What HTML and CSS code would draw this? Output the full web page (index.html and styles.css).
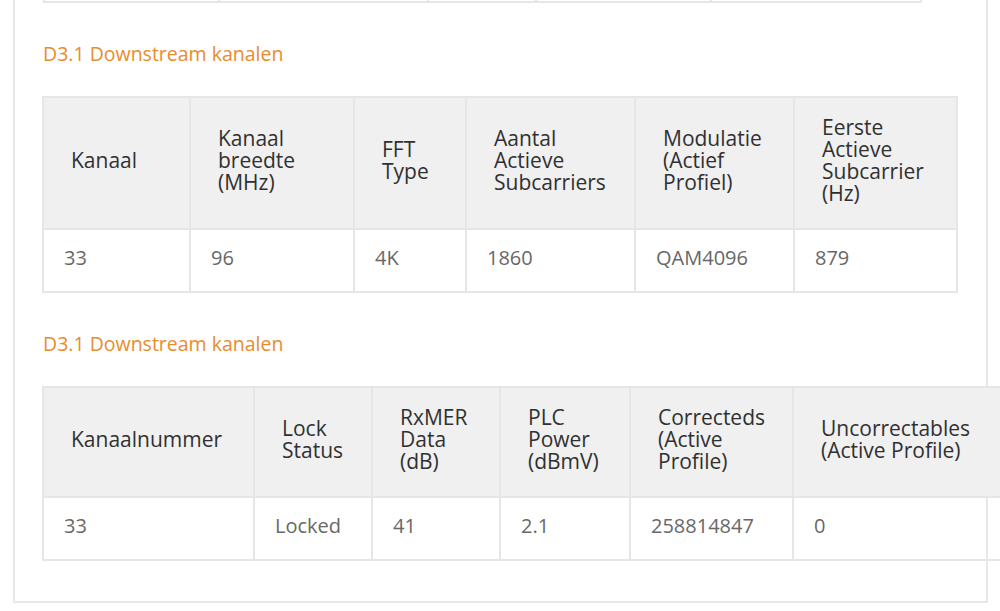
FILE: index.html
```html
<!DOCTYPE html>
<html lang="nl">
<head>
<meta charset="utf-8">
<title>D3.1 Downstream kanalen</title>
<link rel="stylesheet" href="styles.css">
</head>
<body>
<div class="panel">
  <table class="grid prev">
    <colgroup><col class="p1"><col class="p2"><col class="p3"><col class="p4"><col class="p5"></colgroup>
    <tr><td class="stub"></td><td class="stub"></td><td class="stub"></td><td class="stub"></td><td class="stub"></td></tr>
  </table>

  <section class="block">
    <h3 class="title">D3.1 Downstream kanalen</h3>
    <table class="grid t1">
      <colgroup><col class="a1"><col class="a2"><col class="a3"><col class="a4"><col class="a5"><col class="a6"></colgroup>
      <thead>
        <tr>
          <th>Kanaal</th>
          <th>Kanaal<br>breedte<br>(MHz)</th>
          <th>FFT<br>Type</th>
          <th>Aantal<br>Actieve<br>Subcarriers</th>
          <th>Modulatie<br>(Actief<br>Profiel)</th>
          <th>Eerste<br>Actieve<br>Subcarrier<br>(Hz)</th>
        </tr>
      </thead>
      <tbody>
        <tr><td>33</td><td>96</td><td>4K</td><td>1860</td><td>QAM4096</td><td>879</td></tr>
      </tbody>
    </table>
  </section>

  <section class="block">
    <h3 class="title">D3.1 Downstream kanalen</h3>
    <table class="grid t2">
      <colgroup><col class="b1"><col class="b2"><col class="b3"><col class="b4"><col class="b5"><col class="b6"></colgroup>
      <thead>
        <tr>
          <th>Kanaalnummer</th>
          <th>Lock<br>Status</th>
          <th>RxMER<br>Data<br>(dB)</th>
          <th>PLC<br>Power<br>(dBmV)</th>
          <th>Correcteds<br>(Active<br>Profile)</th>
          <th>Uncorrectables<br>(Active Profile)</th>
        </tr>
      </thead>
      <tbody>
        <tr><td>33</td><td>Locked</td><td>41</td><td>2.1</td><td>258814847</td><td>0</td></tr>
      </tbody>
    </table>
  </section>
</div>
</body>
</html>
```

FILE: styles.css
```css
body {
  margin: 0;
  background: #ffffff;
  font-family: "Open Sans", "Noto Sans", sans-serif;
}

.panel {
  margin-left: 13px;
  width: 944px;
  border: 2px solid #e8e8e8;
  border-top: 0;
  padding: 0 0 40px 27px;
}

.grid {
  border-collapse: collapse;
  table-layout: fixed;
}

.grid th {
  background: #f0f0f0;
  color: #303030;
  font-weight: 400;
  font-size: 21px;
  line-height: 22px;
  text-align: left;
  vertical-align: middle;
  padding: 18px 6px 24px 27px;
  border: 2px solid #e6e6e6;
}

.grid td {
  color: #686868;
  font-size: 20px;
  line-height: 22px;
  text-align: left;
  padding: 17px 6px 22px 20px;
  border: 2px solid #e6e6e6;
  white-space: nowrap;
}

.prev {
  margin-left: 1px;
  width: 877px;
}
.grid td.stub {
  height: 1px;
  padding: 0;
  line-height: 0;
  font-size: 0;
  border-top: 0;
}
.p1 { width: 175px; }
.p2 { width: 209px; }
.p3 { width: 108px; }
.p4 { width: 175px; }
.p5 { width: 210px; }

.block {
  margin-top: 37px;
}

.title {
  margin: 0 0 28px 1px;
  font-size: 19.5px;
  line-height: 28px;
  font-weight: 400;
  color: #e98c2b;
}

.t1 { width: 914px; }
.a1 { width: 147px; }
.a2 { width: 164px; }
.a3 { width: 112px; }
.a4 { width: 169px; }
.a5 { width: 159px; }
.a6 { width: 163px; }

.t2 { width: 960px; }
.b1 { width: 211px; }
.b2 { width: 118px; }
.b3 { width: 128px; }
.b4 { width: 130px; }
.b5 { width: 163px; }
.b6 { width: 210px; }
```
